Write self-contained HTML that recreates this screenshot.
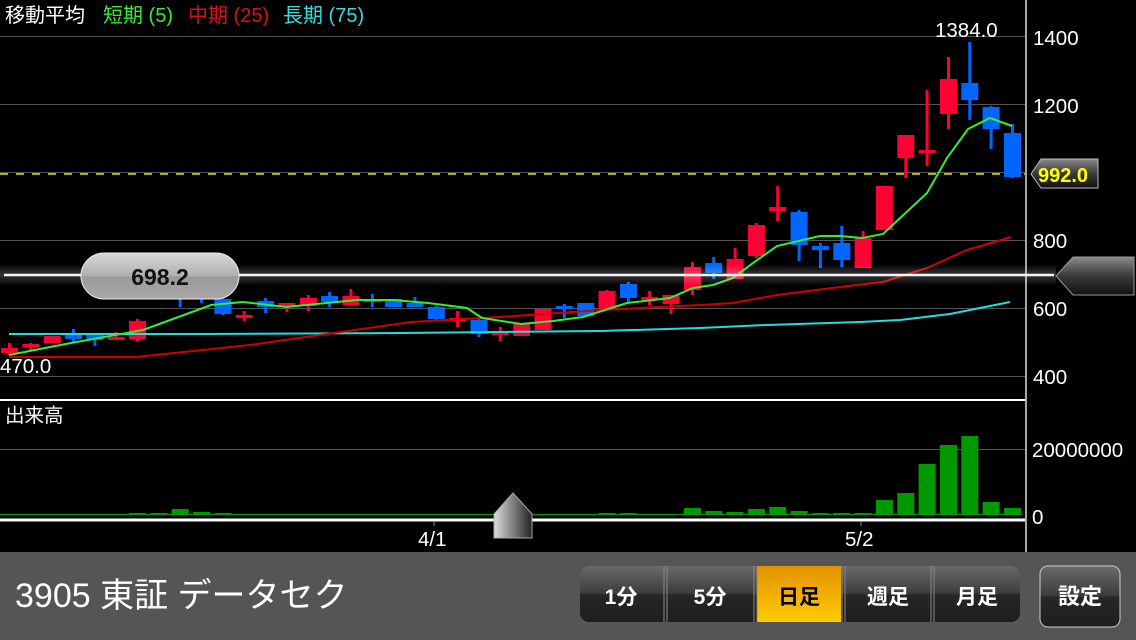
<!DOCTYPE html>
<html><head><meta charset="utf-8"><style>
html,body{margin:0;padding:0;background:#000;width:1136px;height:640px;overflow:hidden}
svg{display:block}
text{font-family:"Liberation Sans","Noto Sans CJK JP",sans-serif}
</style></head><body>
<svg width="1136" height="640" viewBox="0 0 1136 640" xmlns="http://www.w3.org/2000/svg">
<defs>
<linearGradient id="pill" x1="0" y1="0" x2="0" y2="1"><stop offset="0" stop-color="#d8d8d8"/><stop offset="0.5" stop-color="#b0b0b0"/><stop offset="0.52" stop-color="#9a9a9a"/><stop offset="1" stop-color="#a8a8a8"/></linearGradient>
<linearGradient id="dark" x1="0" y1="0" x2="0" y2="1"><stop offset="0" stop-color="#8a8a8a"/><stop offset="0.5" stop-color="#3a3a3a"/><stop offset="1" stop-color="#111"/></linearGradient>
<linearGradient id="btn" x1="0" y1="0" x2="0" y2="1"><stop offset="0" stop-color="#6a6a6a"/><stop offset="0.48" stop-color="#3d3d3d"/><stop offset="0.52" stop-color="#262626"/><stop offset="1" stop-color="#1e1e1e"/></linearGradient>
<linearGradient id="org" x1="0" y1="0" x2="0" y2="1"><stop offset="0" stop-color="#e39100"/><stop offset="1" stop-color="#ffcc00"/></linearGradient>
<linearGradient id="glow" x1="0" y1="0" x2="0" y2="1"><stop offset="0" stop-color="#fff" stop-opacity="0"/><stop offset="0.5" stop-color="#fff" stop-opacity="0.22"/><stop offset="1" stop-color="#fff" stop-opacity="0"/></linearGradient>
<linearGradient id="mark" x1="0" y1="0" x2="1" y2="0"><stop offset="0" stop-color="#ddd"/><stop offset="1" stop-color="#222"/></linearGradient>
</defs>
<!-- grid -->
<g stroke="#555" stroke-width="1">
<line x1="0" y1="36.5" x2="1025" y2="36.5"/>
<line x1="0" y1="104.5" x2="1025" y2="104.5"/>
<line x1="0" y1="172.5" x2="1025" y2="172.5"/>
<line x1="0" y1="240.5" x2="1025" y2="240.5"/>
<line x1="0" y1="308.5" x2="1025" y2="308.5"/>
<line x1="0" y1="376.5" x2="1025" y2="376.5"/>
<line x1="0" y1="449.5" x2="1025" y2="449.5"/>
</g>
<line x1="1026" y1="0" x2="1026" y2="552" stroke="#ddd" stroke-width="1.5"/>
<line x1="0" y1="400" x2="1025" y2="400" stroke="#fff" stroke-width="2"/>
<line x1="0" y1="174" x2="1025" y2="174" stroke="#eeee00" stroke-width="1.6" stroke-dasharray="8,8"/>
<!-- legend -->
<text x="5" y="22" font-size="20" fill="#fff">移動平均</text>
<text x="103" y="22" font-size="20" fill="#33ee33">短期 (5)</text>
<text x="188" y="22" font-size="20" fill="#dd1111">中期 (25)</text>
<text x="283" y="22" font-size="20" fill="#33dddd">長期 (75)</text>
<!-- axis labels -->
<g font-size="20.5" fill="#fff">
<text x="1033" y="45">1400</text>
<text x="1033" y="113">1200</text>
<text x="1033" y="248">800</text>
<text x="1033" y="316">600</text>
<text x="1033" y="384">400</text>
<text x="1032" y="457">20000000</text>
<text x="1032" y="524">0</text>
<text x="935" y="37">1384.0</text>
<text x="0" y="373">470.0</text>
<text x="5" y="422" font-size="19.5">出来高</text>
<text x="418" y="546">4/1</text>
<text x="845" y="546">5/2</text>
</g>
<!-- candles -->
<g fill="#ff0033">
<rect x="8" y="343" width="3" height="12"/><rect x="1" y="348" width="17" height="5"/>
<rect x="29.3" y="343" width="3" height="8"/><rect x="22.3" y="344" width="17" height="3"/>
<rect x="43.7" y="336" width="17" height="7"/>
<rect x="114.7" y="332" width="3" height="8"/><rect x="107.7" y="337" width="17" height="3"/>
<rect x="136" y="319" width="3" height="22"/><rect x="129" y="321" width="17" height="18"/>
<rect x="150.4" y="287" width="17" height="6"/>
<rect x="242.7" y="311" width="3" height="10"/><rect x="235.7" y="315" width="17" height="3"/>
<rect x="285.4" y="303" width="3" height="9"/><rect x="278.4" y="303" width="17" height="3"/>
<rect x="306.8" y="295" width="3" height="16"/><rect x="299.8" y="298" width="17" height="8"/>
<rect x="349.4" y="289" width="3" height="16"/><rect x="342.4" y="296" width="17" height="9"/>
<rect x="456.1" y="311" width="3" height="16"/><rect x="449.1" y="318" width="17" height="3"/>
<rect x="498.8" y="327" width="3" height="14"/><rect x="491.8" y="331" width="17" height="4"/>
<rect x="513.2" y="324" width="17" height="12"/>
<rect x="534.5" y="309" width="17" height="21"/>
<rect x="605.5" y="290" width="3" height="20"/><rect x="598.5" y="291" width="17" height="19"/>
<rect x="648.2" y="291" width="3" height="14"/><rect x="641.2" y="297" width="17" height="3"/>
<rect x="669.5" y="295" width="3" height="19"/><rect x="662.5" y="295" width="17" height="9"/>
<rect x="690.9" y="262" width="3" height="33"/><rect x="683.9" y="267" width="17" height="23"/>
<rect x="733.6" y="248" width="3" height="31"/><rect x="726.6" y="259" width="17" height="20"/>
<rect x="754.9" y="223" width="3" height="35"/><rect x="747.9" y="225" width="17" height="31"/>
<rect x="776.2" y="186" width="3" height="35"/><rect x="769.2" y="207" width="17" height="4"/>
<rect x="861.6" y="231" width="3" height="37"/><rect x="854.6" y="238" width="17" height="30"/>
<rect x="875.9" y="186" width="17" height="44"/>
<rect x="904.3" y="135" width="3" height="43"/><rect x="897.3" y="135" width="17" height="23"/>
<rect x="925.6" y="90" width="3" height="76"/><rect x="918.6" y="150" width="17" height="3"/>
<rect x="947" y="57" width="3" height="72"/><rect x="940" y="79" width="17" height="35"/>
</g>
<g fill="#0066ff">
<rect x="72" y="329" width="3" height="13"/><rect x="65" y="334" width="17" height="5"/>
<rect x="93.4" y="335" width="3" height="11"/><rect x="86.4" y="335" width="17" height="5"/>
<rect x="178.7" y="287" width="3" height="20"/><rect x="171.7" y="292" width="17" height="5"/>
<rect x="200.1" y="293" width="3" height="10"/><rect x="193.1" y="295" width="17" height="3"/>
<rect x="221.4" y="298" width="3" height="17"/><rect x="214.4" y="299" width="17" height="15"/>
<rect x="264.1" y="298" width="3" height="15"/><rect x="257.1" y="301" width="17" height="6"/>
<rect x="328.1" y="292" width="3" height="15"/><rect x="321.1" y="296" width="17" height="6"/>
<rect x="370.8" y="294" width="3" height="13"/><rect x="363.8" y="299" width="17" height="3"/>
<rect x="385.1" y="299" width="17" height="8"/>
<rect x="413.5" y="297" width="3" height="10"/><rect x="406.5" y="303" width="17" height="4"/>
<rect x="434.8" y="306" width="3" height="15"/><rect x="427.8" y="307" width="17" height="12"/>
<rect x="477.5" y="318" width="3" height="19"/><rect x="470.5" y="320" width="17" height="14"/>
<rect x="562.8" y="304" width="3" height="14"/><rect x="555.8" y="306" width="17" height="3"/>
<rect x="577.2" y="303" width="17" height="13"/>
<rect x="626.9" y="282" width="3" height="20"/><rect x="619.9" y="284" width="17" height="14"/>
<rect x="712.2" y="257" width="3" height="22"/><rect x="705.2" y="263" width="17" height="10"/>
<rect x="797.6" y="210" width="3" height="51"/><rect x="790.6" y="212" width="17" height="33"/>
<rect x="818.9" y="243" width="3" height="25"/><rect x="811.9" y="246" width="17" height="4"/>
<rect x="840.3" y="226" width="3" height="41"/><rect x="833.3" y="243" width="17" height="17"/>
<rect x="968.3" y="42" width="3" height="78"/><rect x="961.3" y="83" width="17" height="17"/>
<rect x="989.6" y="106" width="3" height="43"/><rect x="982.6" y="107" width="17" height="22"/>
<rect x="1011" y="124" width="3" height="54"/><rect x="1004" y="133" width="17" height="44"/>
</g>
<!-- MAs -->
<polyline fill="none" stroke="#22dddd" stroke-width="2" points="9,334 200,334 400,333 600,331 700,328 767,325 860,322 900,320 950,314 1010,302"/>
<polyline fill="none" stroke="#cc0000" stroke-width="2" points="9,357 136,357 250,345 411,322 500,317 600,310 700,305 733,303 777,295 840,287 883,282 927,268 967,250 1011,237"/>
<polyline fill="none" stroke="#33ee33" stroke-width="2" points="9,355 71,343 143,330 211,305 243,302 286,307 357,300 393,300 428,303 467,308 482,318 521,324 553,321 583,317 627,303 670,298 693,288 713,285 733,278 753,263 777,246 820,236 840,236 862,238 883,234 927,193 947,158 968,129 990,118 1012,126"/>
<!-- 698.2 line -->
<rect x="0" y="264" width="1056" height="22" fill="url(#glow)"/>
<line x1="4" y1="275" x2="1054" y2="275" stroke="#f4f4f4" stroke-width="2.5"/>
<rect x="81" y="253" width="158" height="46" rx="23" fill="url(#pill)" stroke="#eee" stroke-width="1"/>
<text x="160" y="285" font-size="23" font-weight="bold" fill="#111" text-anchor="middle">698.2</text>
<path d="M1056,276 L1073,257 L1134,257 L1134,295 L1073,295 Z" fill="url(#dark)" stroke="#999" stroke-width="1"/>
<!-- 992 label -->
<path d="M1031,174 L1041,159 L1098,159 L1098,188 L1041,188 Z" fill="url(#dark)" stroke="#bbb" stroke-width="1"/>
<text x="1038" y="182" font-size="20" font-weight="bold" fill="#ffff00">992.0</text>
<!-- volume -->
<g fill="#009900">
<rect x="0" y="514" width="1022" height="1"/>
<rect x="129" y="513" width="17" height="2"/><rect x="150.4" y="513" width="17" height="2"/>
<rect x="171.7" y="509" width="17" height="6"/><rect x="193.1" y="512" width="17" height="3"/><rect x="214.4" y="513" width="17" height="2"/>
<rect x="598.5" y="513" width="17" height="2"/><rect x="619.9" y="513" width="17" height="2"/>
<rect x="683.9" y="508" width="17" height="7"/><rect x="705.2" y="511" width="17" height="4"/><rect x="726.6" y="512" width="17" height="3"/>
<rect x="747.9" y="509" width="17" height="6"/><rect x="769.2" y="507" width="17" height="8"/><rect x="790.6" y="511" width="17" height="4"/>
<rect x="811.9" y="513" width="17" height="2"/><rect x="833.3" y="513" width="17" height="2"/><rect x="854.6" y="513" width="17" height="2"/>
<rect x="875.9" y="500" width="17" height="15"/><rect x="897.3" y="493" width="17" height="22"/><rect x="918.6" y="464" width="17" height="51"/>
<rect x="940" y="445" width="17" height="70"/><rect x="961.3" y="436" width="17" height="79"/><rect x="982.6" y="502" width="17" height="13"/><rect x="1004" y="508" width="17" height="7"/>
</g>
<line x1="0" y1="520" x2="1025" y2="520" stroke="#fff" stroke-width="3"/>
<line x1="434" y1="521" x2="434" y2="526" stroke="#888"/><line x1="861" y1="521" x2="861" y2="526" stroke="#888"/>
<path d="M494,514 L513,493 L532,514 L532,538 L494,538 Z" fill="url(#mark)" stroke="#aaa" stroke-width="1"/>
<!-- bottom bar -->
<rect x="0" y="552" width="1136" height="88" fill="#555"/>
<text x="15" y="607" font-size="34" fill="#fff">3905 東証 データセク</text>
<rect x="580" y="566" width="440" height="56" rx="9" fill="url(#btn)"/>
<rect x="757" y="566" width="84" height="56" fill="url(#org)"/>
<g stroke="#888" stroke-width="1">
<line x1="664" y1="566" x2="664" y2="622"/><line x1="667" y1="566" x2="667" y2="622"/>
<line x1="754" y1="566" x2="754" y2="622"/><line x1="757" y1="566" x2="757" y2="622"/>
<line x1="842" y1="566" x2="842" y2="622"/><line x1="845" y1="566" x2="845" y2="622"/>
<line x1="931" y1="566" x2="931" y2="622"/><line x1="934" y1="566" x2="934" y2="622"/>
</g>
<g font-size="21" font-weight="bold" text-anchor="middle">
<text x="621" y="604" fill="#fff">1分</text>
<text x="710" y="604" fill="#fff">5分</text>
<text x="799" y="604" fill="#000">日足</text>
<text x="888" y="604" fill="#fff">週足</text>
<text x="977" y="604" fill="#fff">月足</text>
</g>
<rect x="1040" y="566" width="80" height="61" rx="8" fill="url(#btn)" stroke="#ccc" stroke-width="1"/>
<text x="1080" y="604" font-size="22" font-weight="bold" fill="#fff" text-anchor="middle">設定</text>
</svg>
</body></html>
